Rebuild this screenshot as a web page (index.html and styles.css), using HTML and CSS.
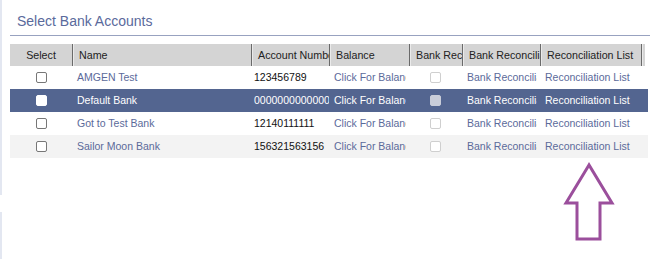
FILE: index.html
```html
<!DOCTYPE html>
<html>
<head>
<meta charset="utf-8">
<link rel="stylesheet" href="styles.css">
</head>
<body>
<div class="panel">
  <h2 class="title">Select Bank Accounts</h2>
  <div class="grid">
    <div class="row head">
      <div class="cell center">Select</div>
      <div class="cell">Name</div>
      <div class="cell">Account Number</div>
      <div class="cell">Balance</div>
      <div class="cell">Bank Reconciled</div>
      <div class="cell">Bank Reconciliation</div>
      <div class="cell">Reconciliation List</div>
      <div class="cell last"></div>
    </div>
    <div class="row">
      <div class="cell center"><span class="cb"></span></div>
      <div class="cell link">AMGEN Test</div>
      <div class="cell num">123456789</div>
      <div class="cell link">Click For Balance</div>
      <div class="cell center"><span class="cb dis"></span></div>
      <div class="cell link">Bank Reconciliation</div>
      <div class="cell link">Reconciliation List</div>
      <div class="cell"></div>
    </div>
    <div class="row sel">
      <div class="cell center"><span class="cb"></span></div>
      <div class="cell link">Default Bank</div>
      <div class="cell num">0000000000000000</div>
      <div class="cell link">Click For Balance</div>
      <div class="cell center"><span class="cb dis"></span></div>
      <div class="cell link">Bank Reconciliation</div>
      <div class="cell link">Reconciliation List</div>
      <div class="cell"></div>
    </div>
    <div class="row">
      <div class="cell center"><span class="cb"></span></div>
      <div class="cell link">Got to Test Bank</div>
      <div class="cell num">12140111111</div>
      <div class="cell link">Click For Balance</div>
      <div class="cell center"><span class="cb dis"></span></div>
      <div class="cell link">Bank Reconciliation</div>
      <div class="cell link">Reconciliation List</div>
      <div class="cell"></div>
    </div>
    <div class="row alt">
      <div class="cell center"><span class="cb"></span></div>
      <div class="cell link">Sailor Moon Bank</div>
      <div class="cell num">156321563156</div>
      <div class="cell link">Click For Balance</div>
      <div class="cell center"><span class="cb dis"></span></div>
      <div class="cell link">Bank Reconciliation</div>
      <div class="cell link">Reconciliation List</div>
      <div class="cell"></div>
    </div>
  </div>
</div>
<svg class="arrow" width="60" height="90" viewBox="560 158 60 90">
  <polygon points="589,165 566,203 577,203 577,239 600,239 600,203 612,203" fill="none" stroke="#9b4f9c" stroke-width="3" stroke-linejoin="miter"/>
</svg>
</body>
</html>
```

FILE: styles.css
```css
html, body {
  margin: 0;
  padding: 0;
  height: 259px;
  overflow: hidden;
}
body {
  font-family: "Liberation Sans", Arial, sans-serif;
  background: #fff linear-gradient(to bottom, #e3e7f1 0, #e3e7f1 195px, transparent 195px, transparent 212px, #e3e7f1 212px) no-repeat 0 0 / 2px 100%;
  position: relative;
}
.panel {
  padding: 0 2px 0 10px;
}
.title {
  margin: 0;
  padding: 13px 0 0 7px;
  height: 22px;
  font-size: 14px;
  font-weight: normal;
  line-height: 17px;
  color: #5a6a9c;
  border-bottom: 1px solid #98a2c0;
}
.grid {
  margin-top: 8px;
  width: 638px;
}
.row {
  display: grid;
  grid-template-columns: 62px 179px 78px 80px 53px 78px 101px 1fr;
  height: 23px;
  align-items: center;
  font-size: 10.5px;
}
.row.head {
  background: #d4d4d4;
  color: #222;
  height: 22px;
  width: 635px;
  font-size: 10.7px;
}
.cell {
  white-space: nowrap;
  overflow: hidden;
  padding-left: 5px;
  line-height: 22px;
  height: 100%;
  border-right: 3px solid transparent;
}
.head .cell {
  padding-left: 6px;
  border-right: none;
  border-left: 1px solid #6a6a6a;
  box-shadow: inset 1px 0 0 #eaeaea;
}
.head .cell:first-child {
  border-left: none;
  box-shadow: none;
}
.cell.center {
  padding-left: 0;
  border-right: none;
  display: flex;
  justify-content: center;
  align-items: center;
}
.head .cell.center {
  display: block;
  text-align: center;
}
.link {
  color: #5b6a9a;
}
.num {
  color: #111;
  padding-left: 3px;
  border-right: none;
}
.row.sel {
  background: #536590;
}
.row.sel .cell {
  color: #fff;
}
.row.alt {
  background: #f3f3f3;
}
.cb {
  display: block;
  width: 9px;
  height: 9px;
  border: 1px solid #777;
  border-radius: 2px;
  background: #fff;
}
.cb.dis {
  border-color: #cfcfcf;
}
.sel .cb {
  border-color: #fff;
}
.sel .cb.dis {
  background: #c9cdd9;
  border-color: #c9cdd9;
}
.arrow {
  position: absolute;
  left: 560px;
  top: 158px;
}
```
